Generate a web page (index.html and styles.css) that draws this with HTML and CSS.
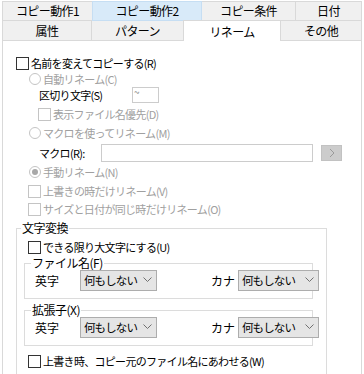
FILE: index.html
```html
<!DOCTYPE html>
<html lang="ja">
<head>
<meta charset="utf-8">
<link rel="stylesheet" href="styles.css">
</head>
<body>
<div class="dlg">
  <div class="tabrow r1">
    <div class="tab w1">コピー動作1</div>
    <div class="tab w2 hover">コピー動作2</div>
    <div class="tab w3">コピー条件</div>
    <div class="tab w4">日付</div>
  </div>
  <div class="tabrow r2">
    <div class="tab v1">属性</div>
    <div class="tab v2">パターン</div>
    <div class="tab v3 sel">リネーム</div>
    <div class="tab v4">その他</div>
  </div>
  <div class="panel">
    <div class="row ra"><span class="cb"></span><span class="lbl">名前を変えてコピーする(R)</span></div>
    <div class="row rb ind1 dis"><span class="rd"></span><span class="lbl">自動リネーム(C)</span></div>
    <div class="row rc ind2"><span class="lbl fixw">区切り文字(S)</span><span class="inp small">~</span></div>
    <div class="row rd-row ind2b dis"><span class="cb dcb"></span><span class="lbl">表示ファイル名優先(D)</span></div>
    <div class="row re ind1 dis"><span class="rd"></span><span class="lbl">マクロを使ってリネーム(M)</span></div>
    <div class="row rf ind2"><span class="lbl fixw2">マクロ(R):</span><span class="inp macro"></span><span class="btn"><svg width="8" height="10" viewBox="0 0 8 10"><polyline points="2,1 6,5 2,9" fill="none" stroke="#9a9a9a" stroke-width="1"/></svg></span></div>
    <div class="row rg ind1 dis"><span class="rd on"></span><span class="lbl">手動リネーム(N)</span></div>
    <div class="row rh ind1c dis"><span class="cb dcb"></span><span class="lbl">上書きの時だけリネーム(V)</span></div>
    <div class="row ri ind1c dis"><span class="cb dcb"></span><span class="lbl">サイズと日付が同じ時だけリネーム(O)</span></div>

    <fieldset class="grp">
      <legend>文字変換</legend>
      <div class="row gj"><span class="cb"></span><span class="lbl">できる限り大文字にする(U)</span></div>
      <fieldset class="sub s1">
        <legend>ファイル名(F)</legend>
        <div class="row selrow">
          <span class="slbl">英字</span>
          <span class="sel1 sw1"><span class="stxt">何もしない</span><svg class="chev" width="9" height="6" viewBox="0 0 9 6"><polyline points="0.5,0.5 4.5,4.5 8.5,0.5" fill="none" stroke="#707070" stroke-width="1"/></svg></span>
          <span class="slbl kana">カナ</span>
          <span class="sel1 sw2"><span class="stxt">何もしない</span><svg class="chev" width="9" height="6" viewBox="0 0 9 6"><polyline points="0.5,0.5 4.5,4.5 8.5,0.5" fill="none" stroke="#707070" stroke-width="1"/></svg></span>
        </div>
      </fieldset>
      <fieldset class="sub s2">
        <legend>拡張子(X)</legend>
        <div class="row selrow">
          <span class="slbl">英字</span>
          <span class="sel1 sw1"><span class="stxt">何もしない</span><svg class="chev" width="9" height="6" viewBox="0 0 9 6"><polyline points="0.5,0.5 4.5,4.5 8.5,0.5" fill="none" stroke="#707070" stroke-width="1"/></svg></span>
          <span class="slbl kana">カナ</span>
          <span class="sel1 sw2"><span class="stxt">何もしない</span><svg class="chev" width="9" height="6" viewBox="0 0 9 6"><polyline points="0.5,0.5 4.5,4.5 8.5,0.5" fill="none" stroke="#707070" stroke-width="1"/></svg></span>
        </div>
      </fieldset>
      <div class="row gl"><span class="cb"></span><span class="lbl">上書き時、コピー元のファイル名にあわせる(W)</span></div>
    </fieldset>
  </div>
</div>
</body>
</html>
```
FILE: styles.css
```css
html, body {
  margin: 0;
  padding: 0;
  background: #ffffff;
  overflow: hidden;
}
body {
  font-family: "Noto Sans CJK JP", "Noto Sans", sans-serif;
  font-size: 11px;
  letter-spacing: -0.7px;
  color: #000;
}
.dlg {
  width: 364px;
  height: 374px;
  padding-top: 1px;
  box-sizing: border-box;
  overflow: hidden;
}
.tabrow {
  display: flex;
  padding-left: 2px;
}
.tab {
  box-sizing: border-box;
  height: 20px;
  border: 1px solid #d9d9d9;
  background: #f0f0f0;
  margin-left: -1px;
  display: flex;
  align-items: center;
  justify-content: center;
  font-size: 12px;
  letter-spacing: -0.6px;
  line-height: 1;
}
.tab:first-child { margin-left: 0; }
.w1 { width: 91px; }
.w2 { width: 110px; }
.w3 { width: 95px; }
.w4 { width: 67px; }
.hover {
  background: #d8eaf9;
  border-color: #c6def3;
  position: relative;
}
.r2 { margin-top: -1px; }
.r2 .tab {
  height: 20px;
  border-bottom: none;
  padding-top: 1px;
}
.v1 { width: 90px; }
.v2 { width: 93px; }
.v3 { width: 98px; }
.v4 { width: 82px; }
.sel {
  background: #ffffff;
  position: relative;
  z-index: 2;
  height: 21px !important;
  margin-bottom: -1px;
}
.panel {
  margin-left: 2px;
  width: 360px;
  height: 336px;
  box-sizing: border-box;
  border: 1px solid #d9d9d9;
  background: #fff;
  padding-top: 13px;
  overflow: hidden;
}
.row {
  display: flex;
  align-items: center;
}
.lbl { white-space: nowrap; }
.dis { color: #a0a0a0; }
.cb {
  width: 13px;
  height: 13px;
  box-sizing: border-box;
  border: 1px solid #333333;
  background: #fff;
  margin-right: 2px;
  flex: none;
}
.dcb { border-color: #c4c4c4; }
.rd {
  width: 12px;
  height: 12px;
  box-sizing: border-box;
  border: 1px solid #c4c4c4;
  border-radius: 50%;
  margin-right: 2px;
  flex: none;
  display: flex;
  align-items: center;
  justify-content: center;
}
.rd.on::after {
  content: "";
  width: 6px;
  height: 6px;
  border-radius: 50%;
  background: #a8a8a8;
}
.ra { height: 18px; padding-left: 13px; }
.rb { height: 13px; }
.ind1 { padding-left: 26px; }
.ind1c { padding-left: 25px; }
.ind2 { padding-left: 36px; }
.ind2b { padding-left: 35px; }
.rc { height: 20px; }
.fixw { width: 93px; flex: none; }
.inp {
  box-sizing: border-box;
  border: 1px solid #cccccc;
  background: #fff;
  flex: none;
}
.small {
  width: 27px;
  height: 16px;
  color: #8a8a8a;
  font-size: 10px;
  line-height: 8px;
  padding-left: 1px;
  align-self: center;
}
.rd-row { height: 18px; }
.re { height: 20px; }
.rf { height: 20px; }
.fixw2 { width: 62px; flex: none; }
.macro { width: 212px; height: 18px; }
.btn {
  width: 21px;
  height: 16px;
  box-sizing: border-box;
  background: #cccccc;
  border: 1px solid #c2c2c2;
  margin-left: 8px;
  display: flex;
  align-items: center;
  justify-content: center;
}
.rg { height: 18px; }
.rh { height: 20px; }
.ri { height: 16px; }
.grp {
  margin: 4px 0 0 13px;
  width: 311px;
  box-sizing: border-box;
  border: 1px solid #dcdcdc;
  padding: 0 0 30px 0;
  min-width: 0;
}
.grp > legend {
  margin-left: 4px;
  padding: 0 1px;
  line-height: 14px;
  font-size: 12px;
  letter-spacing: -0.5px;
}
.gj { height: 18px; margin-top: 3px; padding-left: 11px; }
.sub {
  margin: 0 0 0 7px;
  width: 289px;
  box-sizing: border-box;
  border: 1px solid #dcdcdc;
  padding: 0 0 7px 0;
  min-width: 0;
}
.sub > legend {
  margin-left: 6px;
  padding: 0 1px;
  line-height: 14px;
  font-size: 12px;
  letter-spacing: -0.5px;
}
.s2 { margin-top: 4px; }
.selrow {
  height: 22px;
  margin-top: -1px;
  padding-left: 10px;
}
.slbl {
  font-size: 12px;
  letter-spacing: 0;
  width: 45px;
  flex: none;
  white-space: nowrap;
}
.kana { width: auto; margin-left: 54px; margin-right: 3px; }
.sel1 {
  box-sizing: border-box;
  height: 21px;
  background: #e5e5e5;
  border: 1px solid #adadad;
  display: flex;
  align-items: center;
  padding-left: 3px;
  flex: none;
}
.stxt {
  white-space: nowrap;
  font-size: 11.5px;
  letter-spacing: -0.9px;
}
.sw1 { width: 77px; }
.sw2 { width: 81px; }
.chev {
  margin-left: auto;
  margin-right: 4px;
  flex: none;
}
.gl { height: 18px; margin-top: 6px; padding-left: 11px; }
```
